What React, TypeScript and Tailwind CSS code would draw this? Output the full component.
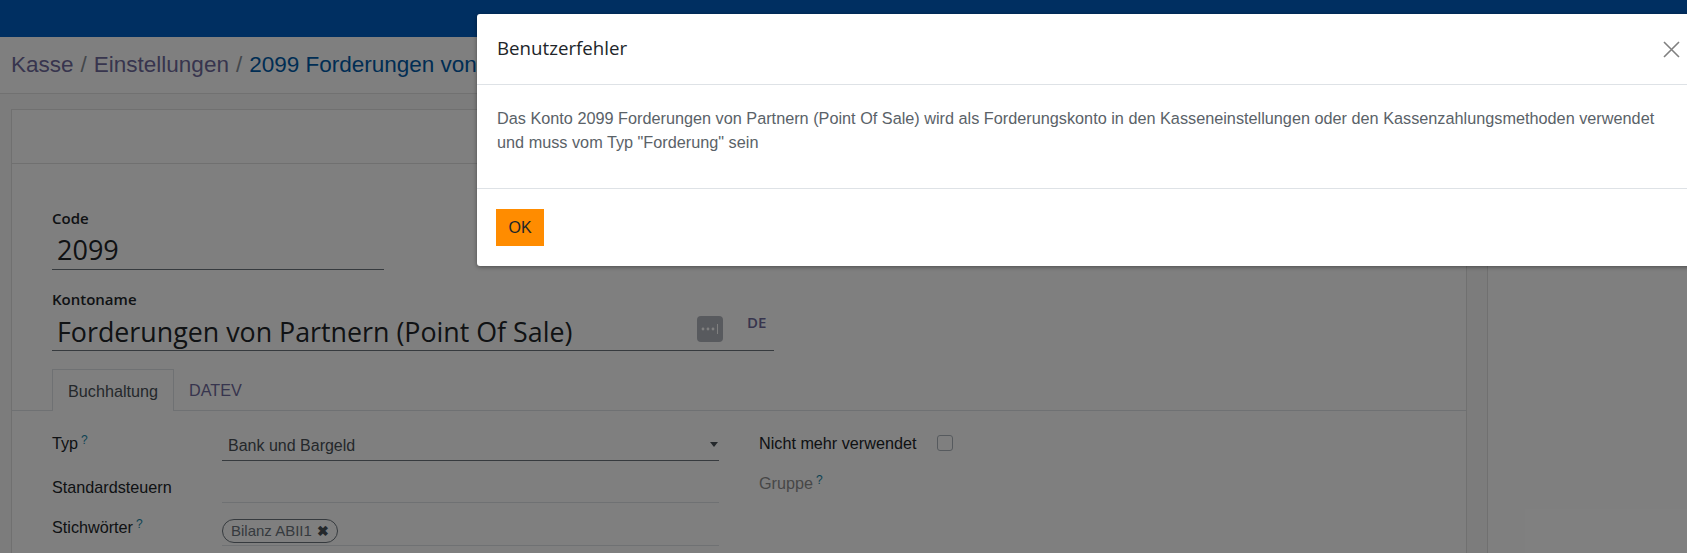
import React from "react";

const Help = () => (
  <sup className="ml-[3px] text-[12px] text-[#1a87a8] relative -top-[5px]">?</sup>
);

const FormRow = ({
  label,
  help,
  className,
  children,
}: {
  label: string;
  help?: boolean;
  className: string;
  children?: React.ReactNode;
}) => (
  <div className={`flex ${className}`}>
    <div className="w-[170px] shrink-0 text-[16.2px] text-[#212529]">
      {label}
      {help && <Help />}
    </div>
    <div className="flex-1 relative border-b border-[#dee2e6] h-full">{children}</div>
  </div>
);

export default function App() {
  return (
    <div className="relative h-[553px] w-full overflow-hidden bg-white font-['Liberation_Sans',sans-serif]">
      <div className="h-[37px] bg-[#005ec2]" />
      <div className="h-[57px] border-b border-[#e2e2e2] pl-[11px] pt-[11px] text-[22.5px] leading-[34px] whitespace-nowrap">
        <span className="text-[#6f6a9c]">Kasse</span>
        <span className="text-[#868e96] mx-[7px]">/</span>
        <span className="text-[#6f6a9c]">Einstellungen</span>
        <span className="text-[#868e96] mx-[7px]">/</span>
        <span className="text-[#005ba8]">2099 Forderungen von Partnern (Point Of Sale)</span>
      </div>

      <div className="flex h-[459px]">
        <div className="w-[1488px] shrink-0 bg-[#f9f9f9] border-r border-[#e0e0e0] pl-[11px] pr-[20px] pt-[15px]">
          <div className="bg-white border border-[#e0e0e0] h-[600px]">
            <div className="h-[54px] border-b border-[#e0e0e0]" />
            <div className="pl-[40px]">
              <div className="mt-[45px] h-[18px] text-[15px] leading-[18px] font-semibold font-['Open_Sans',sans-serif] text-[#212529]">
                Code
              </div>
              <div className="w-[332px] h-[43px] border-b border-[#6c757d] pl-[5px] text-[27px] leading-[46px] font-['Open_Sans',sans-serif] text-[#212529]">
                2099
              </div>
              <div className="mt-[20px] h-[19px] text-[15px] leading-[18px] font-semibold font-['Open_Sans',sans-serif] text-[#212529]">
                Kontoname
              </div>
              <div className="relative w-[722px] h-[42px] border-b border-[#6c757d] pl-[5px] text-[26.8px] leading-[45px] font-['Open_Sans',sans-serif] text-[#212529] whitespace-nowrap">
                Forderungen von Partnern (Point Of Sale)
                <div className="absolute left-[645px] top-[7px] w-[26px] h-[26px] rounded-[4px] bg-[#b0b4bc] flex items-center justify-center">
                  <svg width="20" height="14" viewBox="0 0 20 14">
                    <circle cx="3" cy="7" r="1.4" fill="#fff" />
                    <circle cx="8" cy="7" r="1.4" fill="#fff" />
                    <circle cx="13" cy="7" r="1.4" fill="#fff" />
                    <rect x="17" y="2" width="1" height="10" fill="#fff" />
                  </svg>
                </div>
                <span className="absolute left-[695px] top-[3px] text-[15px] leading-[20px] font-semibold text-[#6f6a9c]">
                  DE
                </span>
              </div>
            </div>

            <div className="mt-[18px] h-[42px] border-b border-[#dee2e6] pl-[40px] flex text-[16.2px]">
              <div className="w-[122px] h-[42px] bg-white border border-b-0 border-[#dee2e6] text-center leading-[42px] text-[#495057]">
                Buchhaltung
              </div>
              <div className="pl-[15px] leading-[42px] text-[#6f6a9c]">DATEV</div>
            </div>

            <div className="pl-[40px] flex">
              <div className="w-[667px]">
                <FormRow label="Typ" help className="mt-[16px] h-[34px] leading-[32px]">
                  <div className="border-b border-[#6c757d] h-[34px] pl-[6px] text-[16px] text-[#495057] leading-[38px]">
                    Bank und Bargeld
                    <span className="absolute right-[1px] top-[15px] border-x-[4px] border-t-[5px] border-x-transparent border-t-[#495057]" />
                  </div>
                </FormRow>
                <FormRow label="Standardsteuern" className="h-[42px] leading-[52px]" />
                <FormRow label="Stichwörter" help className="h-[43px] leading-[48px]">
                  <div className="absolute left-0 top-[16px] h-[24px] w-[116px] rounded-full border border-[#6c757d] pl-[8px] text-[15px] leading-[22px] text-[#6c757d] whitespace-nowrap">
                    Bilanz ABII1
                    <span className="ml-[5px] text-[14px] text-[#495057] font-bold">✖</span>
                  </div>
                </FormRow>
              </div>
              <div className="pl-[40px] text-[16.2px]">
                <div className="mt-[20px] h-[24px] flex items-center text-[#212529]">
                  Nicht mehr verwendet
                  <span className="ml-[21px] w-[16px] h-[16px] rounded-[3px] border border-[#adb5bd] bg-white" />
                </div>
                <div className="mt-[16px] text-[#8f8f8f] leading-[24px]">
                  Gruppe
                  <Help />
                </div>
              </div>
            </div>
          </div>
        </div>
        <div className="flex-1" />
      </div>

      {/* dialog */}
      <div className="absolute inset-0 bg-black/50" />
      <div className="absolute left-[477px] top-[14px] w-[1300px] h-[252px] bg-white rounded-[3px] shadow-[0_1px_4px_rgba(0,0,0,0.4)]">
        <div className="h-[71px] border-b border-[#dee2e6] pl-[20px] relative text-[18.7px] leading-[68px] font-['Open_Sans',sans-serif] font-medium text-[#212529]">
          Benutzerfehler
          <svg
            className="absolute left-[1186px] top-[27px]"
            width="17"
            height="17"
            viewBox="0 0 17 17"
            stroke="#808080"
            strokeWidth="1.6"
          >
            <path d="M1 1 L16 16 M16 1 L1 16" />
          </svg>
        </div>
        <div className="h-[104px] border-b border-[#dee2e6] pl-[20px] pt-[21px]">
          <p className="w-[1180px] text-[16.25px] leading-[24px] text-[#5a6268]">
            Das Konto 2099 Forderungen von Partnern (Point Of Sale) wird als Forderungskonto in den
            Kasseneinstellungen oder den Kassenzahlungsmethoden verwendet und muss vom Typ
            "Forderung" sein
          </p>
        </div>
        <div className="pl-[19px] pt-[20px]">
          <button className="w-[48px] h-[37px] bg-[#ff8c00] text-[16px] text-[#212529]">OK</button>
        </div>
      </div>
    </div>
  );
}
